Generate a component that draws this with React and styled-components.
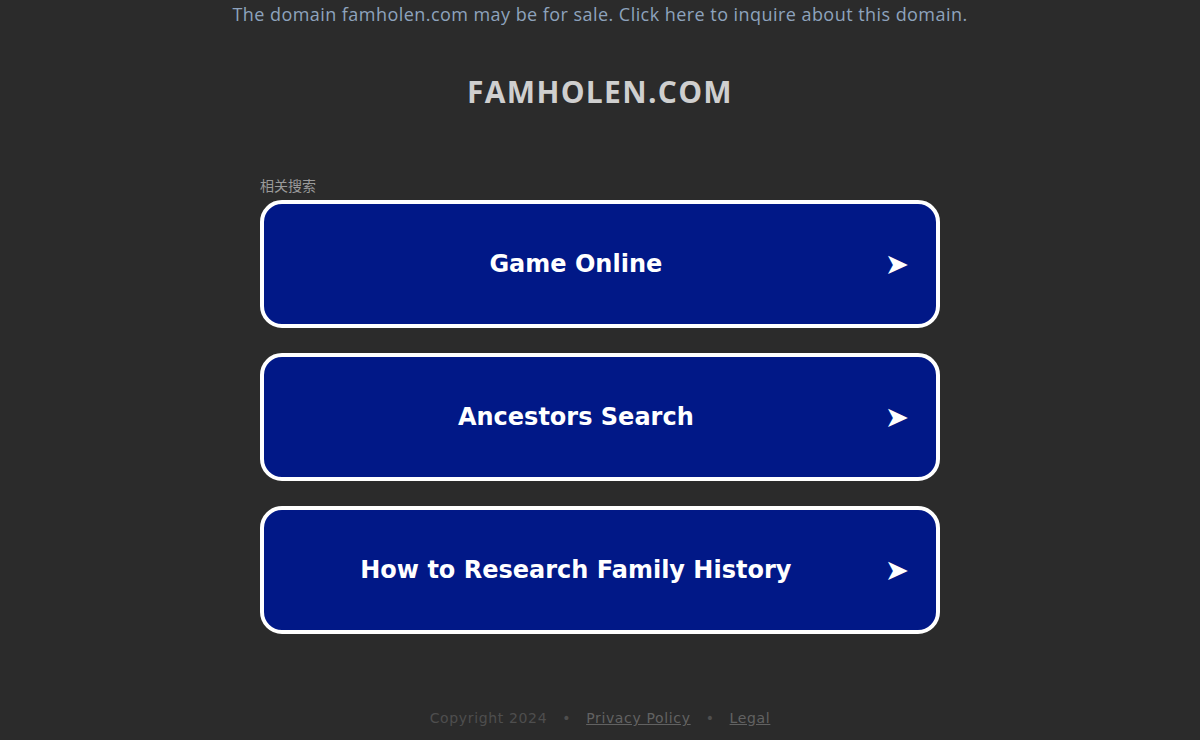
import React from 'react';
import styled, { createGlobalStyle } from 'styled-components';

const GlobalStyle = createGlobalStyle`
  html, body {
    margin: 0;
    padding: 0;
    background: #2b2b2b;
  }
  body {
    font-family: "Open Sans", "Liberation Sans", sans-serif;
  }
`;

const Page = styled.div`
  width: 1200px;
  height: 740px;
  display: flex;
  flex-direction: column;
  align-items: center;
  overflow: hidden;
`;

const SaleBanner = styled.a`
  margin-top: 3px;
  font-family: "Open Sans", "Noto Sans", sans-serif;
  font-size: 18px;
  letter-spacing: 0.45px;
  color: #8ea3bd;
  text-decoration: none;
  line-height: 22px;
`;

const Title = styled.h1`
  margin: 49px 0 0;
  font-family: "Open Sans", sans-serif;
  font-size: 30px;
  font-weight: 700;
  letter-spacing: 1.3px;
  color: #cfcfcf;
  line-height: 36px;
`;

const Results = styled.div`
  margin-top: 67px;
  width: 680px;
  display: flex;
  flex-direction: column;
`;

const Caption = styled.div`
  font-family: "Liberation Sans", "Noto Sans CJK SC", sans-serif;
  font-size: 14px;
  color: #9a9a9a;
  line-height: 18px;
  margin-bottom: 5px;
`;

const LinkList = styled.div`
  display: flex;
  flex-direction: column;
  gap: 25px;
`;

const LinkButton = styled.a`
  box-sizing: border-box;
  height: 128px;
  border: 4px solid #ffffff;
  border-radius: 22px;
  background: #011887;
  display: flex;
  align-items: center;
  padding: 0 27px 0 3px;
  color: #ffffff;
  text-decoration: none;
`;

const LinkText = styled.span`
  flex: 1;
  text-align: center;
  font-family: "DejaVu Sans", Verdana, sans-serif;
  font-weight: 700;
  font-size: 24px;
`;

const Arrow = styled.span`
  font-family: "DejaVu Sans", sans-serif;
  font-size: 29px;
  line-height: 1;
`;

const Footer = styled.div`
  margin-top: auto;
  margin-bottom: 13px;
  display: flex;
  gap: 15px;
  font-family: "DejaVu Sans", sans-serif;
  font-size: 14px;
  letter-spacing: 0.65px;
  color: #4e4e4e;
  line-height: 18px;
`;

const FooterLink = styled.a`
  color: #626262;
  text-decoration: underline;
`;

const items = ['Game Online', 'Ancestors Search', 'How to Research Family History'];

export default function App() {
  return (
    <Page>
      <GlobalStyle />
      <SaleBanner href="#">
        The domain famholen.com may be for sale. Click here to inquire about this domain.
      </SaleBanner>
      <Title>FAMHOLEN.COM</Title>
      <Results>
        <Caption>相关搜索</Caption>
        <LinkList>
          {items.map((t) => (
            <LinkButton href="#" key={t}>
              <LinkText>{t}</LinkText>
              <Arrow>➤</Arrow>
            </LinkButton>
          ))}
        </LinkList>
      </Results>
      <Footer>
        <span>Copyright 2024</span>
        <span>•</span>
        <FooterLink href="#">Privacy Policy</FooterLink>
        <span>•</span>
        <FooterLink href="#">Legal</FooterLink>
      </Footer>
    </Page>
  );
}
